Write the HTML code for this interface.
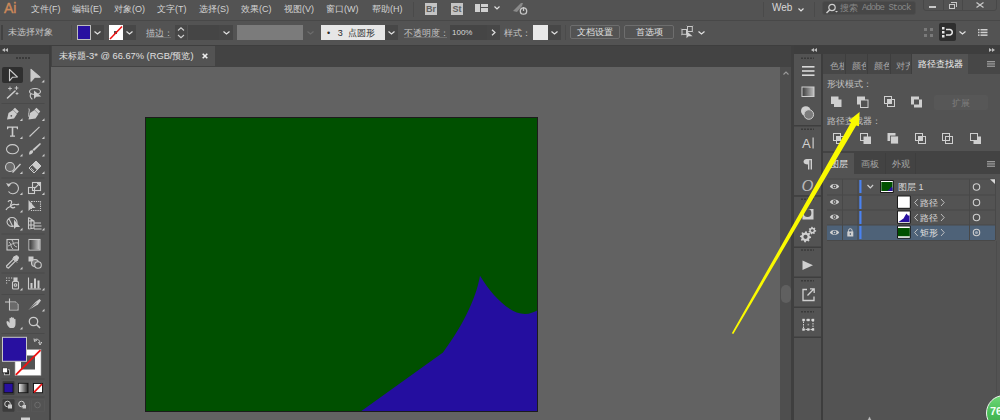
<!DOCTYPE html>
<html><head><meta charset="utf-8">
<style>
*{margin:0;padding:0;box-sizing:border-box}
html,body{width:1000px;height:420px;overflow:hidden;background:#535353;font-family:"Liberation Sans",sans-serif;color:#d6d6d6}
.a{position:absolute}
.t{position:absolute;white-space:nowrap;font-size:9px;line-height:12px;color:#d2d2d2}
svg{position:absolute;overflow:visible}
.cb{position:absolute;top:25px;height:15px;background:#474747}
.ch{position:absolute;width:7px;height:4px}
.sep{position:absolute;height:1px;background:#3f3f3f}
.dots{position:absolute;height:2px;background:repeating-linear-gradient(90deg,#3a3a3a 0 2px,transparent 2px 3px)}
</style></head><body>
<!-- ============ MENU BAR ============ -->
<div class="a" style="left:0;top:20px;width:1000px;height:1px;background:#484848"></div>
<div class="t" style="left:4px;top:0px;font-size:14px;line-height:16px;color:#cc895a;-webkit-text-stroke:0.4px #cc895a">Ai</div>
<div class="t" style="left:31px;top:3px">文件(F)</div>
<div class="t" style="left:72px;top:3px">编辑(E)</div>
<div class="t" style="left:114px;top:3px">对象(O)</div>
<div class="t" style="left:157px;top:3px">文字(T)</div>
<div class="t" style="left:199px;top:3px">选择(S)</div>
<div class="t" style="left:241px;top:3px">效果(C)</div>
<div class="t" style="left:284px;top:3px">视图(V)</div>
<div class="t" style="left:326px;top:3px">窗口(W)</div>
<div class="t" style="left:372px;top:3px">帮助(H)</div>
<div class="a" style="left:413px;top:2px;width:1px;height:15px;background:#4a4a4a"></div>
<div class="a" style="left:425px;top:3px;width:12px;height:12px;background:#c4c4c4"></div>
<div class="t" style="left:425px;top:3px;width:12px;text-align:center;font-size:9px;line-height:12px;color:#606060;font-weight:bold">Br</div>
<div class="a" style="left:451px;top:3px;width:12px;height:12px;background:#c4c4c4"></div>
<div class="t" style="left:451px;top:3px;width:12px;text-align:center;font-size:9px;line-height:12px;color:#606060;font-weight:bold">St</div>
<div class="a" style="left:475px;top:4px;width:5px;height:8px;background:#d0d0d0"></div>
<div class="a" style="left:481px;top:4px;width:7px;height:3px;background:#d0d0d0"></div>
<div class="a" style="left:481px;top:8px;width:7px;height:4px;background:#d0d0d0"></div>
<svg style="left:494px;top:6px" width="6" height="4"><path d="M0.5,0.5 L3,3 L5.5,0.5" fill="none" stroke="#e0e0e0" stroke-width="1.2"/></svg>
<svg style="left:512px;top:2px" width="16" height="13"><path d="M1,9 L9,1 L11,1 L10,4 L5,10 Z" fill="#8a8a8a"/><circle cx="11.5" cy="9" r="3.2" fill="none" stroke="#c8c8c8" stroke-width="1.3"/><path d="M11.5,5 V9" stroke="#c8c8c8" stroke-width="1.3"/></svg>
<div class="a" style="left:763px;top:2px;width:1px;height:15px;background:#4a4a4a"></div>
<div class="t" style="left:772px;top:2px;font-size:10px;color:#d8d8d8">Web</div>
<svg style="left:798px;top:8px" width="6" height="4"><path d="M0.5,0.5 L3,3 L5.5,0.5" fill="none" stroke="#e0e0e0" stroke-width="1.2"/></svg>
<div class="a" style="left:814px;top:2px;width:1px;height:15px;background:#4a4a4a"></div>
<div class="a" style="left:822px;top:1px;width:94px;height:14px;background:#474747;border:1px solid #4d4d4d;border-radius:3px"></div>
<svg style="left:825px;top:3px" width="14" height="11"><circle cx="7" cy="4.5" r="3.2" fill="none" stroke="#cfcfcf" stroke-width="1.2"/><path d="M4.8,6.8 L1.5,10" stroke="#cfcfcf" stroke-width="1.5"/><path d="M10,8 L13,8 L11.5,9.5 Z" fill="#cfcfcf"/></svg>
<div class="t" style="left:840px;top:2px;font-size:9px;color:#888">搜索</div>
<div class="t" style="left:862px;top:2px;font-family:'Liberation Mono',monospace;font-size:9px;letter-spacing:-1px;color:#888">Adobe Stock</div>
<div class="a" style="left:923px;top:-2px;width:74px;height:13px;border:1px solid #484848;border-radius:0 0 3px 3px;background:#535353"></div>
<div class="a" style="left:943px;top:0;width:1px;height:11px;background:#484848"></div>
<div class="a" style="left:962px;top:0;width:1px;height:11px;background:#484848"></div>
<div class="a" style="left:929px;top:6px;width:7px;height:2px;background:#c8c8c8"></div>
<div class="a" style="left:949px;top:4px;width:6px;height:5px;border:1px solid #c8c8c8"></div>
<div class="a" style="left:951px;top:2px;width:6px;height:5px;border:1px solid #c8c8c8;border-left:none;border-bottom:none"></div>
<svg style="left:976px;top:2px" width="8" height="6"><path d="M0.5,0.5 L7.5,5.5 M7.5,0.5 L0.5,5.5" stroke="#c8c8c8" stroke-width="1.3"/></svg>

<!-- ============ CONTROL BAR ============ -->
<div class="a" style="left:1px;top:25px;width:2px;height:15px;background:#424242"></div>
<div class="t" style="left:8px;top:26px;color:#c4c4c4">未选择对象</div>
<div class="a" style="left:71px;top:25px;width:1px;height:15px;background:#4b4b4b"></div>
<div class="a" style="left:77px;top:25px;width:14px;height:15px;background:#2810a0;border:1px solid #bdbdbd"></div>
<div class="cb" style="left:91px;width:13px"></div>
<div class="a" style="left:109px;top:25px;width:14px;height:15px;background:#fff"></div>
<svg style="left:109px;top:25px" width="14" height="15"><rect x="5" y="6" width="3" height="3" fill="#555"/><path d="M1,14 L13,1.5" stroke="#ee1010" stroke-width="1.5"/></svg>
<div class="cb" style="left:123px;width:13px"></div>
<div class="t" style="left:146px;top:27px;color:#c4c4c4">描边：</div>
<div class="a" style="left:146px;top:37px;width:25px;height:1px;background:#6e6e6e"></div>
<div class="cb" style="left:175px;width:12px"></div>
<svg style="left:177px;top:27px" width="8" height="12"><path d="M1,3.5 L4,0.8 L7,3.5 M1,8 L4,10.7 L7,8" fill="none" stroke="#d0d0d0" stroke-width="1.1"/></svg>
<div class="cb" style="left:188px;width:31px;background:#454545"></div>
<div class="cb" style="left:219px;width:14px"></div>
<div class="a" style="left:237px;top:25px;width:66px;height:15px;background:#7b7b7b"></div>
<div class="a" style="left:321px;top:25px;width:64px;height:15px;background:#e6e6e6"></div>
<div class="t" style="left:327px;top:27px;color:#2a2a2a">•&nbsp;&nbsp;&nbsp;3&nbsp;&nbsp;点圆形</div>
<div class="cb" style="left:385px;width:13px"></div>
<div class="t" style="left:404px;top:27px;color:#c4c4c4">不透明度：</div>
<div class="a" style="left:404px;top:37px;width:43px;height:1px;background:#6e6e6e"></div>
<div class="cb" style="left:450px;width:37px;background:#454545"></div>
<div class="t" style="left:452px;top:27px;font-size:8px;color:#d8d8d8">100%</div>
<div class="cb" style="left:487px;width:13px"></div>
<svg style="left:491px;top:29px" width="5" height="7"><path d="M1,0.8 L4,3.5 L1,6.2" fill="none" stroke="#e0e0e0" stroke-width="1.2"/></svg>
<div class="t" style="left:504px;top:27px;color:#c4c4c4">样式：</div>
<div class="a" style="left:533px;top:25px;width:15px;height:15px;background:#e8e8e8"></div>
<div class="cb" style="left:548px;width:13px"></div>
<div class="a" style="left:565px;top:25px;width:1px;height:15px;background:#4b4b4b"></div>
<div class="a" style="left:570px;top:25px;width:50px;height:14px;border:1px solid #6e6e6e;border-radius:2px"></div>
<div class="t" style="left:570px;top:26px;width:50px;text-align:center;color:#e0e0e0">文档设置</div>
<div class="a" style="left:624px;top:25px;width:50px;height:14px;border:1px solid #6e6e6e;border-radius:2px"></div>
<div class="t" style="left:624px;top:26px;width:50px;text-align:center;color:#e0e0e0">首选项</div>
<svg width="14" height="14" style="left:680px;top:25px" viewBox="680 25 14 14"><g fill="none" stroke="#c8c8c8" stroke-width="1"><rect x="682" y="29.5" width="4.5" height="4.8"/><rect x="687.5" y="26.5" width="4.8" height="5"/><path d="M681.2,28.7 L682,29.5 M687,34.8 L686.5,34.3 M681.2,35 L682,34.3 M686.7,25.7 L687.5,26.5 M693,25.7 L692.3,26.5 M693,32.3 L692.3,31.5" stroke-width="0.8"/></g><path d="M686.5,31 L686.5,38.3 L688.6,36.2 L692.6,36.2 Z" fill="#cfcfcf"/></svg>
<svg style="left:698px;top:31px" width="7" height="4"><path d="M0.5,0.5 L3.5,3 L6.5,0.5" fill="none" stroke="#e0e0e0" stroke-width="1.2"/></svg>
<!-- right -->
<svg style="left:924px;top:28px" width="9" height="9"><rect x="0" y="0" width="3" height="3" fill="#7a7a7a"/><rect x="6" y="0" width="3" height="3" fill="#7a7a7a"/><rect x="0" y="6" width="3" height="3" fill="#7a7a7a"/><rect x="6" y="6" width="3" height="3" fill="#7a7a7a"/></svg>
<div class="a" style="left:939px;top:23px;width:17px;height:18px;background:#2e2e2e;border-radius:2px"></div>
<svg style="left:942px;top:27px" width="12" height="11"><rect x="0" y="0" width="2.5" height="2.5" fill="#e6e6e6"/><rect x="0" y="4" width="2.5" height="2.5" fill="#e6e6e6"/><rect x="0" y="8" width="2.5" height="2.5" fill="#e6e6e6"/><path d="M4,2.5 H8 A2.8,2.8 0 0 1 8,8 H4" fill="none" stroke="#e6e6e6" stroke-width="1.5"/></svg>
<svg style="left:959px;top:31px" width="7" height="4"><path d="M0.5,0.5 L3.5,3 L6.5,0.5" fill="none" stroke="#e0e0e0" stroke-width="1.2"/></svg>
<svg style="left:978px;top:29px" width="10" height="7"><rect x="0" y="0" width="1.5" height="1.5" fill="#d0d0d0"/><rect x="0" y="2.7" width="1.5" height="1.5" fill="#d0d0d0"/><rect x="0" y="5.4" width="1.5" height="1.5" fill="#d0d0d0"/><rect x="2.5" y="0" width="7" height="1.5" fill="#d0d0d0"/><rect x="2.5" y="2.7" width="7" height="1.5" fill="#d0d0d0"/><rect x="2.5" y="5.4" width="7" height="1.5" fill="#d0d0d0"/></svg>
<div class="a" style="left:0;top:45px;width:1000px;height:1px;background:#3e3e3e"></div>
<svg style="left:94px;top:31px" width="7" height="4"><path d="M0.5,0.5 L3.5,3 L6.5,0.5" fill="none" stroke="#e0e0e0" stroke-width="1.2"/></svg>
<svg style="left:126px;top:31px" width="7" height="4"><path d="M0.5,0.5 L3.5,3 L6.5,0.5" fill="none" stroke="#e0e0e0" stroke-width="1.2"/></svg>
<svg style="left:223px;top:31px" width="7" height="4"><path d="M0.5,0.5 L3.5,3 L6.5,0.5" fill="none" stroke="#e0e0e0" stroke-width="1.2"/></svg>
<svg style="left:307px;top:31px" width="7" height="4"><path d="M0.5,0.5 L3.5,3 L6.5,0.5" fill="none" stroke="#6c6c6c" stroke-width="1.2"/></svg>
<svg style="left:388px;top:31px" width="7" height="4"><path d="M0.5,0.5 L3.5,3 L6.5,0.5" fill="none" stroke="#e0e0e0" stroke-width="1.2"/></svg>
<svg style="left:551px;top:31px" width="7" height="4"><path d="M0.5,0.5 L3.5,3 L6.5,0.5" fill="none" stroke="#e0e0e0" stroke-width="1.2"/></svg>

<!-- ============ TAB BAR + CANVAS ============ -->
<div class="a" style="left:51px;top:46px;width:740px;height:21px;background:#434343"></div>
<div class="a" style="left:52px;top:46px;width:163px;height:20px;background:#535353"></div>
<div class="t" style="left:59px;top:50px;font-size:9.3px;color:#e0e0e0">未标题-3* @ 66.67% (RGB/预览)</div>
<svg style="left:202px;top:53px" width="6" height="6"><path d="M0.7,0.7 L5.3,5.3 M5.3,0.7 L0.7,5.3" stroke="#f0f0f0" stroke-width="1.6"/></svg>
<div class="a" style="left:51px;top:67px;width:729px;height:353px;background:#626262"></div>
<div class="a" style="left:780px;top:67px;width:11px;height:353px;background:#4e4e4e"></div>
<svg style="left:783px;top:71px" width="6" height="4"><path d="M0.5,3.5 L3,1 L5.5,3.5" fill="none" stroke="#9a9a9a" stroke-width="1.1"/></svg>
<div class="a" style="left:781px;top:285px;width:10px;height:18px;background:#606060;border-radius:5px"></div>
<div class="a" style="left:791px;top:45px;width:3px;height:375px;background:#3f3f3f"></div>

<svg width="1000" height="420" style="left:0;top:0">
<rect x="145.5" y="117.5" width="392" height="294" fill="#005000" stroke="#1c1c1c" stroke-width="1"/>
<path d="M361.4,411 L443,352.4 C460,330 476,300 480,275.8 C492,296 510,314 525,314 C530,314 534,312 537,310.5 L537,411 Z" fill="#240e9f"/>
</svg>

<!-- ============ TOOLBAR ============ -->
<div class="a" style="left:0;top:46px;width:49px;height:8px;background:#3f3f3f"></div>
<svg style="left:2px;top:48px" width="6" height="4"><path d="M0,2 L3,0 L3,4 Z M3,2 L6,0 L6,4 Z" fill="#bdbdbd"/></svg>
<div class="a" style="left:49px;top:45px;width:2px;height:375px;background:#3d3d3d"></div>
<div class="dots" style="left:16px;top:57px;width:14px"></div>
<div class="a" style="left:2px;top:67px;width:21px;height:16px;background:#2f2f2f;border-radius:2px"></div>
<svg width="49" height="374" style="left:0;top:46px" viewBox="0 46 49 374">
<g fill="none" stroke="#cbcbcb" stroke-width="1.1" stroke-linejoin="round" stroke-linecap="round">
<!-- selection -->
<path d="M9.5,69.5 L9.5,80.8 L12.6,77.2 L17.4,77 Z"/>
<!-- direct selection filled -->
<path d="M31,69.3 L31,81.3 L34.5,77.3 L40,77.2 Z" fill="#cbcbcb"/>
<!-- magic wand -->
<path d="M7.5,98 L15,91" stroke-width="1.6"/>
<path d="M10,87 V90 M8.5,88.5 H11.5 M16.5,86.5 V89.5 M15,88 H18 M17,92.5 V94.5 M16,93.5 H18" stroke-width="0.9"/>
<!-- lasso -->
<ellipse cx="35" cy="91.5" rx="5.5" ry="3"/>
<path d="M31,94 C29,96 31,98 32,99"/>
<path d="M34,90.5 L34,99 L36.3,96.8 L41.3,96.5 Z" fill="#cbcbcb" stroke="none"/>
</g>
<rect x="1.5" y="103" width="43" height="1" fill="#4a4a4a"/>
<g fill="#cbcbcb" stroke="none">
<!-- pen -->
<path d="M7,119.5 L8.5,113 L13,110 L17,114 L14,118.5 Z M13,109.5 L15,107.8 L18.8,111.5 L17,113.5 Z"/>
<circle cx="11.3" cy="115.8" r="0.9" fill="#535353"/>
<!-- curvature pen -->
<path d="M28.5,119.5 L30,113 L34.5,110 L38.5,114 L35.5,118.5 Z M34.5,109.5 L36.5,107.8 L40.3,111.5 L38.5,113.5 Z"/>
<path d="M28.8,108.5 C30.5,110 27.5,114 29,117" fill="none" stroke="#cbcbcb" stroke-width="0.9"/>
<!-- T -->
<path d="M7,126.5 H18 V129.2 H17 L16.5,127.8 H13.3 V135.6 H15 V136.7 H10 V135.6 H11.7 V127.8 H8.5 L8,129.2 H7 Z"/>
<!-- line -->
<path d="M29.5,136.5 L39.5,126.8" fill="none" stroke="#cbcbcb" stroke-width="1.1"/>
<!-- ellipse -->
<ellipse cx="12.5" cy="149.2" rx="6" ry="4.6" fill="none" stroke="#cbcbcb" stroke-width="1.1"/>
<!-- brush -->
<path d="M29,154.5 C29,151 31,149.5 33,150.5 C33.5,152.5 32,154.5 29,154.5 Z M32.5,149.5 L40,143 L41,144 L34,151 Z"/>
<!-- shaper -->
<circle cx="10" cy="167" r="4.5" fill="#6a6a6a" stroke="#cbcbcb" stroke-width="1.1"/>
<path d="M12,172 L20,163.5 L21,164.5 L13,173 Z"/>
<!-- eraser -->
<path d="M29,168 L36,161 L41,166 L34,173 Z M30.8,168 L34,171.2" fill="none" stroke="#cbcbcb" stroke-width="1"/>
<path d="M32,165 L36,161 L41,166 L37,170 Z"/>
</g>
<rect x="1.5" y="177.5" width="43" height="1" fill="#4a4a4a"/>
<g fill="none" stroke="#cbcbcb" stroke-width="1.1">
<!-- rotate -->
<path d="M8,186 A5.5,5.5 0 1 1 8.5,191.5"/>
<path d="M6,183 L8.5,187 L11,184.5 Z" fill="#cbcbcb" stroke="none"/>
<!-- scale -->
<rect x="28.5" y="187.5" width="6" height="6"/>
<rect x="32.5" y="182.5" width="8" height="8"/>
<path d="M35,188 L39.5,183.5 M37,183.5 H39.5 V186"/>
<!-- warp -->
<path d="M6,210 C8,206 10,208 12,205 C14,203 17,206 19,204 M8,202 C10,199 13,201 11,204 C9,207 13,209 15,207" stroke-width="1.2"/>
<!-- free transform -->
<path d="M28.5,200 L28.5,211 L31.5,208 L35.5,208 Z" fill="#cbcbcb" stroke="none"/>
<rect x="31.5" y="201.5" width="9" height="9" stroke-dasharray="1.2,1"/>
<!-- shape builder -->
<path d="M7,222 A5,4.5 0 0 1 17,222 L17,224 M7,222 A5,4.5 0 0 0 14,226 M9,219 L13,227"/>
<path d="M14,219.5 L14,229 L16,227 L20,227 Z" fill="#cbcbcb" stroke="none"/>
<!-- perspective grid -->
<path d="M28.5,217.5 L28.5,229 M28.5,217.5 L34,221 L34,228 L28.5,229 M28.5,221 H34 M28.5,225 H34 M31,218.5 V228.6 M34,223 H41 M34,226 H41.5 M34,229 H41.5"/>
</g>
<rect x="1.5" y="233.5" width="43" height="1" fill="#4a4a4a"/>
<g fill="none" stroke="#cbcbcb" stroke-width="1.1">
<!-- mesh -->
<rect x="7" y="239.5" width="11.5" height="10.5"/>
<path d="M9,242 C12,244 10,247 13,249 M12,240 C14,243 13,246 17,247 M8,246 C11,245 14,242 18,243" stroke-width="0.9"/>
<!-- gradient -->
<rect x="29" y="239.5" width="11" height="10.5"/>
</g>
<defs><linearGradient id="gr1" x1="0" x2="1"><stop offset="0" stop-color="#3a3a3a"/><stop offset="1" stop-color="#c8c8c8"/></linearGradient>
<linearGradient id="gr2" x1="0" x2="1"><stop offset="0" stop-color="#f0f0f0"/><stop offset="1" stop-color="#202020"/></linearGradient></defs>
<rect x="29.5" y="240" width="10" height="9.5" fill="url(#gr1)"/>
<g fill="none" stroke="#cbcbcb" stroke-width="1.1">
<!-- eyedropper -->
<path d="M7,267.5 L6.5,266 L13.5,259 L15.5,261 L8.5,268 Z"/>
<path d="M13,257.5 L16,255.8 C17.5,255.5 18.5,256.5 18.5,258 L17,261 Z M12.5,258 L17,262.5" fill="#cbcbcb" stroke-width="1"/>
<!-- blend -->
<rect x="28.5" y="256.5" width="5" height="5" fill="#cbcbcb" stroke="none"/>
<circle cx="35" cy="263" r="3.5" fill="#7a7a7a"/>
<circle cx="38" cy="265" r="3.3" fill="#535353"/>
</g>
<rect x="1.5" y="272.5" width="43" height="1" fill="#4a4a4a"/>
<g fill="none" stroke="#cbcbcb" stroke-width="1.1">
<!-- symbol sprayer -->
<path d="M6,278 h1.2 M8.5,278 h1.2 M11,278 h1.2 M6,280.5 h1.2 M8.5,280.5 h1.2 M6,283 h1.2" stroke-width="1.2"/>
<rect x="12.5" y="281.5" width="6" height="7.5" rx="1"/>
<rect x="14" y="278" width="3" height="3" fill="#cbcbcb"/>
<circle cx="15.5" cy="285" r="1.3"/>
<!-- column graph -->
<path d="M28.5,277.5 V289 H41" />
<rect x="30.5" y="283" width="2" height="5.5" fill="#cbcbcb" stroke="none"/>
<rect x="34" y="278.5" width="2" height="10" fill="#cbcbcb" stroke="none"/>
<rect x="37.5" y="280.5" width="2" height="8" fill="#cbcbcb" stroke="none"/>
</g>
<rect x="1.5" y="294" width="43" height="1" fill="#4a4a4a"/>
<g fill="none" stroke="#cbcbcb" stroke-width="1.1">
<!-- artboard -->
<path d="M5,302 H9.5 V298.5 M9.5,302 V310 H18 V304.5 L15.5,302 H9.5"/>
<rect x="10" y="302.5" width="7.5" height="7" fill="#6a6a6a" stroke="none"/>
<!-- slice / knife -->
<path d="M28.5,310 L35.5,302 L39.5,299 L41,300.5 L38,304.5 Z" fill="#cbcbcb" stroke="none"/>
<path d="M29,309.5 L36.5,303" stroke="#535353" stroke-width="0.8"/>
<!-- hand -->
<path d="M10,328 C7,326 6.5,323 6.5,321.5 L8,321 L9.5,323 V318.5 C9.5,317.5 11,317.5 11,318.5 V322 V317.8 C11,316.8 12.5,316.8 12.5,317.8 V322 V318.3 C12.5,317.3 14,317.3 14,318.3 V322 V319.5 C14,318.5 15.5,318.5 15.5,319.5 V324 C15.5,326 14.5,328 13,328 Z" fill="#cbcbcb" stroke="none"/>
<!-- zoom -->
<circle cx="33.5" cy="321.5" r="4.2" stroke-width="1.3"/>
<path d="M36.5,324.5 L40,328" stroke-width="1.6"/>
</g>
<!-- corner triangles -->
<g fill="#cbcbcb">
<path d="M41.5,82.5 L44.3,82.5 L44.3,79.7 Z"/>
<path d="M19.8,121 L22.5,121 L22.5,118.3 Z"/>
<path d="M41.8,121 L44.5,121 L44.5,118.3 Z"/>
<path d="M19.8,139 L22.5,139 L22.5,136.3 Z"/>
<path d="M41.8,139 L44.5,139 L44.5,136.3 Z"/>
<path d="M19.8,156.5 L22.5,156.5 L22.5,153.8 Z"/>
<path d="M41.8,156.5 L44.5,156.5 L44.5,153.8 Z"/>
<path d="M19.8,174 L22.5,174 L22.5,171.3 Z"/>
<path d="M41.8,174 L44.5,174 L44.5,171.3 Z"/>
<path d="M19.8,195 L22.5,195 L22.5,192.3 Z"/>
<path d="M41.8,195 L44.5,195 L44.5,192.3 Z"/>
<path d="M19.8,212.5 L22.5,212.5 L22.5,209.8 Z"/>
<path d="M19.8,230.5 L22.5,230.5 L22.5,227.8 Z"/>
<path d="M41.8,230.5 L44.5,230.5 L44.5,227.8 Z"/>
<path d="M19.8,269.5 L22.5,269.5 L22.5,266.8 Z"/>
<path d="M19.8,290.5 L22.5,290.5 L22.5,287.8 Z"/>
<path d="M41.8,290.5 L44.5,290.5 L44.5,287.8 Z"/>
<path d="M41.8,311.5 L44.5,311.5 L44.5,308.8 Z"/>
<path d="M19.8,329.5 L22.5,329.5 L22.5,326.8 Z"/>
</g>
<rect x="1.5" y="333" width="43" height="1" fill="#4a4a4a"/>
<!-- stroke swatch -->
<rect x="15" y="349.5" width="26" height="26" fill="#ffffff" stroke="#9a9a9a" stroke-width="0.6"/>
<rect x="21" y="355.5" width="14" height="14" fill="#535353"/>
<path d="M15.8,374.8 L40.5,350.2" stroke="#ee1111" stroke-width="1.8"/>
<!-- fill swatch -->
<rect x="2.5" y="337.3" width="24" height="24" fill="#2810a0" stroke="#c8c8c8" stroke-width="1"/>
<!-- swap -->
<path d="M34.5,340 C36,338.5 39.5,338.8 40,343 M34,338.5 L34.5,341.5 L37,340 M38.5,342 L40,345 L41.8,342" fill="none" stroke="#cbcbcb" stroke-width="1"/>
<!-- default -->
<rect x="4.5" y="369.8" width="5" height="5" fill="#222" stroke="#cbcbcb" stroke-width="0.8"/>
<rect x="2.5" y="367.8" width="5" height="5" fill="#fff" stroke="#333" stroke-width="0.8"/>
<rect x="1.5" y="378.5" width="43" height="1" fill="#4a4a4a"/>
<!-- color mode -->
<rect x="2.5" y="381" width="12" height="14" fill="#3c3c3c" rx="1"/>
<rect x="17" y="381" width="12.5" height="14" fill="none" stroke="#5a5a5a" stroke-width="0.7" rx="1"/>
<rect x="31.5" y="381" width="13" height="14" fill="none" stroke="#5a5a5a" stroke-width="0.7" rx="1"/>
<rect x="4" y="383.3" width="9" height="9.4" fill="#2810a0" stroke="#111" stroke-width="0.8"/>
<rect x="18.5" y="383.3" width="9.5" height="9.4" fill="url(#gr2)" stroke="#111" stroke-width="0.8"/>
<rect x="33.5" y="383.5" width="9" height="9.2" fill="#fff" stroke="#111" stroke-width="0.9"/>
<path d="M34,392.3 L42,384" stroke="#ee1111" stroke-width="1.8"/>
<rect x="1.5" y="396.5" width="43" height="1" fill="#4a4a4a"/>
<!-- draw modes -->
<rect x="2.5" y="399.3" width="12" height="12.5" fill="#3c3c3c" rx="1"/>
<rect x="17" y="399.3" width="12.5" height="12.5" fill="none" stroke="#5a5a5a" stroke-width="0.7" rx="1"/>
<rect x="31.5" y="399.3" width="13" height="12.5" fill="none" stroke="#5a5a5a" stroke-width="0.7" rx="1"/>
<circle cx="7.5" cy="404" r="2.8" fill="none" stroke="#cbcbcb" stroke-width="1"/>
<rect x="8" y="404.5" width="4" height="4" fill="#cbcbcb"/>
<circle cx="21.5" cy="404" r="2.8" fill="none" stroke="#cbcbcb" stroke-width="1"/>
<rect x="22.5" y="405" width="3.5" height="3.5" fill="#cbcbcb"/>
<circle cx="37.5" cy="405" r="2.8" fill="none" stroke="#6c6c6c" stroke-width="1"/>
<rect x="21" y="417.5" width="9" height="3" fill="#d0d0d0"/>
</svg>


<!-- ============ DOCK ============ -->
<div class="a" style="left:794px;top:46px;width:206px;height:8px;background:#3e3e3e"></div>
<svg style="left:811px;top:48px" width="6" height="4"><path d="M0,2 L3,0 L3,4 Z M3,2 L6,0 L6,4 Z" fill="#bdbdbd"/></svg>
<svg style="left:989px;top:48px" width="6" height="4"><path d="M6,2 L3,0 L3,4 Z M3,2 L0,0 L0,4 Z" fill="#bdbdbd"/></svg>
<div class="a" style="left:821px;top:54px;width:2px;height:366px;background:#3d3d3d"></div>
<svg width="27" height="366" style="left:794px;top:54px" viewBox="794 54 27 366">
<g fill="#3a3a3a">
<rect x="800" y="57.5" width="14" height="1.5" fill="url(#dd)"/>
</g>
<defs><pattern id="dd" width="3" height="2" patternUnits="userSpaceOnUse"><rect width="2" height="2" fill="#3a3a3a"/></pattern></defs>
<!-- menu -->
<rect x="802" y="66" width="12.5" height="1.6" fill="#d8d8d8"/>
<rect x="802" y="70.2" width="12.5" height="1.6" fill="#d8d8d8"/>
<rect x="802" y="74.4" width="12.5" height="1.6" fill="#d8d8d8"/>
<!-- gradient -->
<defs><linearGradient id="gd" x1="0" x2="1"><stop offset="0" stop-color="#3a3a3a"/><stop offset="1" stop-color="#c0c0c0"/></linearGradient></defs>
<rect x="802" y="87" width="12" height="9.5" fill="url(#gd)" stroke="#cfcfcf" stroke-width="1"/>
<!-- transparency -->
<circle cx="805.8" cy="111" r="4.8" fill="#cfcfcf"/>
<circle cx="808.8" cy="114.5" r="4.8" fill="#7c7c7c" stroke="#cfcfcf" stroke-width="1"/>
<rect x="794" y="125" width="27" height="1.5" fill="#3e3e3e"/>
<rect x="800" y="128.5" width="14" height="1.5" fill="url(#dd)"/>
<!-- A| -->
<text x="802" y="148" font-family="Liberation Sans" font-size="13" fill="#d0d0d0">A</text>
<rect x="812.5" y="137.5" width="1.2" height="11" fill="#d0d0d0"/>
<!-- pilcrow -->
<path d="M806.5,159 H812 V169.5 H810.6 V160.3 H809.4 V169.5 H808 V164.5 C805,164.5 803.5,163 803.5,161.7 C803.5,160.2 805,159 806.5,159 Z" fill="#d0d0d0"/>
<!-- O italic -->
<text x="801.5" y="190.5" font-family="Liberation Serif" font-style="italic" font-size="16.5" fill="#b8b8b8">O</text>
<rect x="794" y="195.2" width="27" height="1.5" fill="#3e3e3e"/>
<rect x="800" y="198.5" width="14" height="1.5" fill="url(#dd)"/>
<!-- image trace square w/ circle -->
<rect x="802.5" y="209" width="11" height="10.5" fill="#cfcfcf"/>
<circle cx="807.5" cy="213" r="3.9" fill="#535353"/>
<!-- gears -->
<path d="M811.10,236.80 L810.99,237.89 L809.38,238.41 L808.99,239.13 L809.46,240.76 L808.61,241.46 L807.11,240.68 L806.32,240.92 L805.50,242.40 L804.41,242.29 L803.89,240.68 L803.17,240.29 L801.54,240.76 L800.84,239.91 L801.62,238.41 L801.38,237.62 L799.90,236.80 L800.01,235.71 L801.62,235.19 L802.01,234.47 L801.54,232.84 L802.39,232.14 L803.89,232.92 L804.68,232.68 L805.50,231.20 L806.59,231.31 L807.11,232.92 L807.83,233.31 L809.46,232.84 L810.16,233.69 L809.38,235.19 L809.62,235.98 Z" fill="#cfcfcf"/><circle cx="805.5" cy="236.8" r="2.1" fill="#535353"/><path d="M816.20,230.60 L816.10,231.47 L814.91,231.86 L814.57,232.41 L814.73,233.65 L813.99,234.11 L812.95,233.43 L812.30,233.50 L811.43,234.40 L810.61,234.11 L810.49,232.87 L810.03,232.41 L808.79,232.29 L808.50,231.47 L809.40,230.60 L809.47,229.95 L808.79,228.91 L809.25,228.17 L810.49,228.33 L811.04,227.99 L811.43,226.80 L812.30,226.70 L812.95,227.77 L813.56,227.99 L814.73,227.55 L815.35,228.17 L814.91,229.34 L815.13,229.95 Z" fill="#cfcfcf"/><circle cx="812.3" cy="230.6" r="1.4" fill="#535353"/>
<rect x="794" y="246.5" width="27" height="1.5" fill="#3e3e3e"/>
<rect x="800" y="249.3" width="14" height="1.5" fill="url(#dd)"/>
<!-- play -->
<path d="M802.5,260.5 L813,265.3 L802.5,270 Z" fill="#d0d0d0"/>
<rect x="794" y="276.5" width="27" height="1.5" fill="#3e3e3e"/>
<rect x="800" y="280" width="14" height="1.5" fill="url(#dd)"/>
<!-- export -->
<path d="M807,289.5 H803 V300.5 H814 V296.5" fill="none" stroke="#d0d0d0" stroke-width="1.3"/>
<path d="M807.5,295.5 L813.8,289 M810,288.8 H814.2 V293" fill="none" stroke="#d0d0d0" stroke-width="1.3"/>
<rect x="794" y="306.5" width="27" height="1.5" fill="#3e3e3e"/>
<rect x="800" y="311" width="14" height="1.5" fill="url(#dd)"/>
<!-- artboard -->
<rect x="803.5" y="320" width="9.5" height="9.5" fill="none" stroke="#d0d0d0" stroke-width="1" stroke-dasharray="1.5,1"/>
<g fill="#d8d8d8"><rect x="802.3" y="318.8" width="2.4" height="2.4"/><rect x="811.8" y="318.8" width="2.4" height="2.4"/><rect x="802.3" y="328.3" width="2.4" height="2.4"/><rect x="811.8" y="328.3" width="2.4" height="2.4"/><rect x="807.1" y="318.8" width="2.4" height="2.4"/><rect x="807.1" y="328.3" width="2.4" height="2.4"/></g>
<rect x="807.5" y="323.8" width="1.6" height="1.6" fill="#9a9a9a"/>
<rect x="794" y="336.5" width="27" height="1.5" fill="#3e3e3e"/>
</svg>


<!-- ============ PATHFINDER PANEL ============ -->
<div class="a" style="left:823px;top:54px;width:177px;height:20px;background:#474747"></div>
<div class="a" style="left:912px;top:54px;width:56px;height:20px;background:#535353"></div>
<div class="a" style="left:845px;top:54px;width:1px;height:20px;background:#3e3e3e"></div>
<div class="a" style="left:867px;top:54px;width:1px;height:20px;background:#3e3e3e"></div>
<div class="a" style="left:890px;top:54px;width:1px;height:20px;background:#3e3e3e"></div>
<div class="a" style="left:911px;top:54px;width:1px;height:20px;background:#3e3e3e"></div>
<div class="a" style="left:829px;top:58px;width:15px;height:14px;overflow:hidden"><div class="t" style="left:1px;top:2px;color:#a6a6a6">色板</div></div>
<div class="a" style="left:851px;top:58px;width:15px;height:14px;overflow:hidden"><div class="t" style="left:1px;top:2px;color:#a6a6a6">颜色</div></div>
<div class="a" style="left:873px;top:58px;width:16px;height:14px;overflow:hidden"><div class="t" style="left:1px;top:2px;color:#a6a6a6">颜色</div></div>
<div class="a" style="left:895px;top:58px;width:15px;height:14px;overflow:hidden"><div class="t" style="left:1px;top:2px;color:#a6a6a6">对齐</div></div>
<div class="t" style="left:918px;top:58px;color:#f0f0f0">路径查找器</div>
<svg style="left:987px;top:61px" width="8" height="6"><rect x="0" y="0" width="8" height="1.3" fill="#9a9a9a"/><rect x="0" y="2.3" width="8" height="1.3" fill="#9a9a9a"/><rect x="0" y="4.6" width="8" height="1.3" fill="#9a9a9a"/></svg>
<div class="t" style="left:827px;top:78px;color:#c0c0c0">形状模式：</div>
<svg width="177" height="100" style="left:823px;top:54px" viewBox="823 54 177 100">
<g stroke="#cfcfcf" stroke-width="1" fill="none">
<!-- unite -->
<path d="M831,96.5 H838.5 V99.5 H841.5 V107 H834 V104 H831 Z" fill="#cfcfcf" stroke="none"/>
<!-- minus front -->
<rect x="857" y="96.5" width="8" height="8" fill="#cfcfcf" stroke="none"/>
<rect x="860.5" y="100" width="7.5" height="7.5" fill="#535353"/>
<!-- intersect -->
<rect x="884.5" y="96.5" width="7" height="7"/>
<rect x="887.5" y="99.5" width="7" height="7"/>
<rect x="888" y="100" width="3" height="3" fill="#cfcfcf" stroke="none"/>
<!-- exclude -->
<path d="M911,96.5 H919 V99.5 H922 V107.5 H914 V104.5 H911 Z" fill="#cfcfcf" stroke="none"/>
<rect x="914" y="99.5" width="5" height="5" fill="#535353" stroke="none"/>
<!-- divide -->
<rect x="833.5" y="133.5" width="7" height="7"/>
<rect x="836.5" y="136.5" width="7" height="7"/>
<rect x="837" y="137" width="3" height="3" fill="#cfcfcf" stroke="none"/>
<!-- trim -->
<rect x="860.5" y="133.5" width="7" height="7"/>
<rect x="863.5" y="136.5" width="7.5" height="7.5" fill="#cfcfcf" stroke="none"/>
<!-- merge -->
<rect x="887.5" y="133" width="8" height="8" fill="#cfcfcf" stroke="none"/>
<rect x="890.5" y="136" width="8" height="8" fill="#cfcfcf" stroke="#535353" stroke-width="0.8"/>
<!-- crop -->
<rect x="915.5" y="133.5" width="7" height="7"/>
<rect x="918.5" y="136.5" width="7" height="7"/>
<rect x="919" y="137" width="3" height="3" fill="#cfcfcf" stroke="none"/>
<!-- outline -->
<rect x="942.5" y="133.5" width="7" height="7"/>
<rect x="945.5" y="136.5" width="7" height="7"/>
<!-- minus back -->
<rect x="970.5" y="133.5" width="7" height="7"/>
<rect x="973.5" y="136.5" width="7.5" height="7.5" fill="#cfcfcf" stroke="none"/>
<rect x="971" y="134" width="6" height="6" fill="#535353" stroke="none"/>
</g>
</svg>

<div class="a" style="left:934px;top:95px;width:54px;height:15px;background:#575757;border-radius:2px"></div>
<div class="t" style="left:934px;top:97px;width:54px;text-align:center;color:#7e7e7e">扩展</div>
<div class="t" style="left:827px;top:115px;color:#c0c0c0">路径查找器：</div>

<!-- ============ LAYERS PANEL ============ -->
<div class="a" style="left:823px;top:151px;width:177px;height:23px;background:#434343"></div>
<div class="a" style="left:823px;top:153px;width:31px;height:21px;background:#535353"></div>
<div class="a" style="left:885px;top:153px;width:1px;height:21px;background:#3e3e3e"></div>
<div class="a" style="left:915px;top:153px;width:1px;height:21px;background:#3e3e3e"></div>
<div class="t" style="left:830px;top:158px;color:#e8e8e8">图层</div>
<div class="t" style="left:861px;top:158px;color:#a6a6a6">画板</div>
<div class="t" style="left:892px;top:158px;color:#a6a6a6">外观</div>
<svg style="left:987px;top:161px" width="8" height="6"><rect x="0" y="0" width="8" height="1.3" fill="#9a9a9a"/><rect x="0" y="2.3" width="8" height="1.3" fill="#9a9a9a"/><rect x="0" y="4.6" width="8" height="1.3" fill="#9a9a9a"/></svg>
<div class="a" style="left:827px;top:179px;width:168px;height:61px;background:#535353"></div>
<div class="a" style="left:827px;top:225px;width:168px;height:15px;background:#4e6278"></div>
<svg width="177" height="80" style="left:823px;top:174px" viewBox="823 174 177 80">
<g fill="#484848">
<rect x="827" y="178.5" width="168" height="1"/>
<rect x="827" y="194.5" width="168" height="1"/>
<rect x="827" y="209.5" width="168" height="1"/>
<rect x="827" y="224.5" width="168" height="1"/>
<rect x="827" y="240" width="168" height="1"/>
<rect x="842" y="179" width="1" height="61"/>
<rect x="857.5" y="179" width="1" height="61"/>
<rect x="969" y="179" width="1" height="61"/>
<rect x="995" y="179" width="1" height="61"/>
</g>
<path d="M990,179.3 L995,179.3 L995,184 Z" fill="#d8d8d8"/>
<g fill="none" stroke="#cfcfcf">
<path d="M829.8,186.5 C831.5,183.2 837.5,183.2 839.2,186.5 C837.5,189.8 831.5,189.8 829.8,186.5 Z" fill="#d0d0d0" stroke="none"/><circle cx="834.5" cy="186.5" r="1.9" fill="#535353" stroke="none"/>
<circle cx="834.5" cy="186.5" r="0.8" fill="#d0d0d0" stroke="none"/>
<path d="M829.8,202 C831.5,198.7 837.5,198.7 839.2,202 C837.5,205.3 831.5,205.3 829.8,202 Z" fill="#d0d0d0" stroke="none"/><circle cx="834.5" cy="202" r="1.9" fill="#535353" stroke="none"/>
<circle cx="834.5" cy="202" r="0.8" fill="#d0d0d0" stroke="none"/>
<path d="M829.8,217 C831.5,213.7 837.5,213.7 839.2,217 C837.5,220.3 831.5,220.3 829.8,217 Z" fill="#d0d0d0" stroke="none"/><circle cx="834.5" cy="217" r="1.9" fill="#535353" stroke="none"/>
<circle cx="834.5" cy="217" r="0.8" fill="#d0d0d0" stroke="none"/>
<path d="M829.8,232.5 C831.5,229.2 837.5,229.2 839.2,232.5 C837.5,235.8 831.5,235.8 829.8,232.5 Z" fill="#d0d0d0" stroke="none"/><circle cx="834.5" cy="232.5" r="1.9" fill="#4e6278" stroke="none"/>
<circle cx="834.5" cy="232.5" r="0.8" fill="#d0d0d0" stroke="none"/>
<circle cx="976.5" cy="187" r="3.2" stroke-width="1.1"/>
<circle cx="976.5" cy="202.5" r="3.2" stroke-width="1.1"/>
<circle cx="976.5" cy="217.5" r="3.2" stroke-width="1.1"/>
<circle cx="976.5" cy="232.5" r="3.2" stroke-width="1.1"/>
<circle cx="976.5" cy="232.5" r="1.6" fill="#9ca7b4" stroke="none"/>
<path d="M867.5,185 L870.3,187.8 L873.1,185" stroke-width="1.2"/>
<path d="M848.5,232 V230.5 A1.8,1.8 0 0 1 852.1,230.5 V232" stroke-width="1"/>
</g>
<rect x="847.3" y="231.5" width="6" height="5" fill="#cfcfcf"/>
<rect x="849.8" y="233" width="1" height="2" fill="#4e6278"/>
<g fill="#4a82f0">
<rect x="859.3" y="180" width="2.2" height="13"/>
<rect x="859.3" y="196" width="2.2" height="13"/>
<rect x="859.3" y="211" width="2.2" height="13"/>
<rect x="859.3" y="226" width="2.2" height="13"/>
</g>
<!-- thumbnails -->
<rect x="880" y="180" width="13.8" height="13" fill="#1a1a1a" rx="1"/>
<rect x="881" y="181" width="11.8" height="11" fill="#fff"/>
<rect x="881.3" y="182" width="11.2" height="9" fill="#005000"/>
<path d="M887.5,191 L890.5,188 L891.5,186.5 L892.5,188 V191 Z" fill="#2810a0"/>
<rect x="897" y="195.5" width="13.8" height="13.3" fill="#1a1a1a" rx="1"/>
<rect x="898" y="196.5" width="11.8" height="11.3" fill="#fff"/>
<rect x="897" y="210.5" width="13.8" height="13.3" fill="#1a1a1a" rx="1"/>
<rect x="898" y="211.5" width="11.8" height="11.3" fill="#fff"/>
<path d="M898.5,222 L903.5,218.5 L905.5,215 L906.5,213.5 L908,215.5 L909.5,215.5 V222 Z" fill="#2810a0"/>
<rect x="897" y="225.5" width="13.8" height="13.3" fill="#1a1a1a" rx="1"/>
<rect x="898" y="226.5" width="11.8" height="11.3" fill="#fff"/>
<rect x="898" y="228" width="11.8" height="8.3" fill="#005000"/>
</svg>
<div class="t" style="left:898px;top:181px;color:#d8d8d8">图层&nbsp;1</div>
<div class="t" style="left:920px;top:197px;color:#d8d8d8">路径</div>
<div class="t" style="left:920px;top:212px;color:#d8d8d8">路径</div>
<div class="t" style="left:920px;top:227px;color:#e0e0e0">矩形</div>
<svg width="40" height="50" style="left:910px;top:195px" viewBox="910 195 40 50"><g fill="none" stroke="#c8c8c8" stroke-width="0.9">
<path d="M917.8,199 L914.6,202.5 L917.8,206 M941,199 L944.2,202.5 L941,206"/>
<path d="M917.8,214 L914.6,217.5 L917.8,221 M941,214 L944.2,217.5 L941,221"/>
<path d="M917.8,229 L914.6,232.5 L917.8,236 M941,229 L944.2,232.5 L941,236"/>
</g></svg>


<div class="a" style="left:995.5px;top:241px;width:1px;height:154px;background:#4c4c4c"></div>
<div class="a" style="left:986px;top:395px;width:36px;height:36px;border-radius:50%;background:linear-gradient(180deg,#6fd877 0%,#4cc05a 45%,#3aa548 100%);border:1.3px solid #eef6ee"></div>
<div class="t" style="left:990px;top:405px;font-size:11px;font-weight:bold;color:#f4fff4">76</div>
<svg width="10" height="6" style="left:866px;top:415px"><path d="M3.5,1 L1,6 L6,6 Z" fill="#bcbcbc" stroke="#444" stroke-width="0.5"/></svg>
<!-- ============ ARROW ============ -->
<svg width="1000" height="420" style="left:0;top:0">
<polygon points="859.6,112.1 848.9,120.4 851,122.5 731.8,333.2 733.3,334 856.2,125.5 859,126.3" fill="#fafa00"/>
</svg>
</body></html>
